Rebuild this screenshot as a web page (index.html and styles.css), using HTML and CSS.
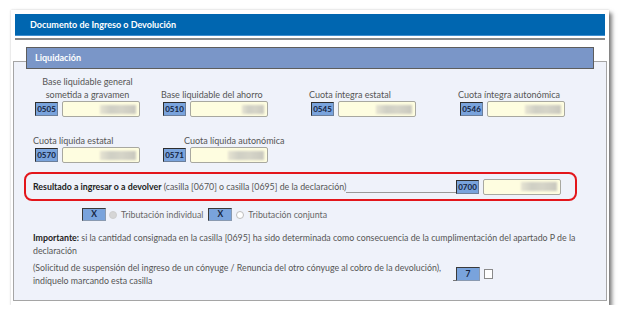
FILE: index.html
```html
<!DOCTYPE html>
<html lang="es">
<head>
<meta charset="utf-8">
<title>Documento de Ingreso o Devolución</title>
<link rel="stylesheet" href="styles.css">
</head>
<body>
<div class="card">
  <div class="titlebar">Documento de Ingreso o Devolución</div>
  <div class="rule"></div>
  <div class="section">
    <div class="sec-head">Liquidación</div>
    <div class="panel">
      <div class="grid row1">
        <div class="field">
          <div class="label center">Base liquidable general<br>sometida a gravamen</div>
          <div class="inputs"><span class="code">0505</span><span class="input"><span class="blur"></span></span></div>
        </div>
        <div class="field">
          <div class="label">Base liquidable del ahorro</div>
          <div class="inputs"><span class="code">0510</span><span class="input"><span class="blur short"></span></span></div>
        </div>
        <div class="field">
          <div class="label">Cuota íntegra estatal</div>
          <div class="inputs"><span class="code">0545</span><span class="input"><span class="blur"></span></span></div>
        </div>
        <div class="field">
          <div class="label">Cuota íntegra autonómica</div>
          <div class="inputs"><span class="code">0546</span><span class="input"><span class="blur"></span></span></div>
        </div>
      </div>
      <div class="grid row2">
        <div class="field">
          <div class="label">Cuota líquida estatal</div>
          <div class="inputs"><span class="code">0570</span><span class="input"><span class="blur"></span></span></div>
        </div>
        <div class="field">
          <div class="label indent">Cuota líquida autonómica</div>
          <div class="inputs"><span class="code">0571</span><span class="input"><span class="blur"></span></span></div>
        </div>
      </div>
      <div class="result">
        <span class="res-text"><b>Resultado a ingresar o a devolver</b> (casilla [0670] o casilla [0695] de la declaración)</span>
        <span class="filler"></span>
        <span class="code over">0700</span>
        <span class="input"><span class="blur"></span></span>
      </div>
      <div class="trib">
        <span class="xbox">X</span>
        <span class="radio disabled"></span>
        <span class="trib-label">Tributación individual</span>
        <span class="xbox">X</span>
        <span class="radio"></span>
        <span class="trib-label">Tributación conjunta</span>
      </div>
      <p class="imp"><b>Importante:</b> si la cantidad consignada en la casilla [0695] ha sido determinada como consecuencia de la cumplimentación del apartado P de la<br>declaración</p>
      <div class="susp">
        <p class="susp-text">(Solicitud de suspensión del ingreso de un cónyuge / Renuncia del otro cónyuge al cobro de la devolución),<br>indíquelo marcando esta casilla</p>
        <span class="tick"></span>
        <span class="xbox seven">7</span>
        <span class="check"></span>
      </div>
    </div>
  </div>
</div>
</body>
</html>
```
FILE: styles.css
```css
* { box-sizing: border-box; }
html, body { margin: 0; padding: 0; background: #ffffff; }
body { font-family: Lato, "Noto Sans", sans-serif; font-size: 8.8px; color: #555; }

.card {
  margin: 10px 0 0 11px;
  width: 598px;
  height: 295px;
  padding: 2px;
  background: #fff;
  box-shadow: 0 0 2px rgba(0,0,0,0.18), 3px 3px 4px rgba(0,0,0,0.5);
}
.titlebar {
  margin: 2px 2px 0;
  height: 22px;
  background: #0066b0;
  border-bottom: 1px solid #3f8fd0;
  color: #fff;
  font-weight: 700;
  font-size: 9px;
  line-height: 21px;
  padding-left: 15px;
}
.rule { margin: 2px 2px 0; height: 2px; background: #8a8a8a; }

.section { margin-top: 7px; }
.sec-head {
  position: relative;
  z-index: 1;
  margin: 0 13px;
  height: 22px;
  background: #7a96c8;
  border: 1px solid #5d5d5d;
  color: #fff;
  font-weight: 700;
  font-size: 9px;
  line-height: 20px;
  padding-left: 8px;
}
.panel {
  margin-top: -8px;
  height: 240px;
  background: #eff2fa;
  border: 1px solid #a5a5a5;
  padding-top: 13px;
}
.grid {
  display: grid;
  grid-template-columns: 128px 148px 149px 1fr;
  align-items: end;
  padding-left: 21px;
}
.row2 { margin-top: 17px; }
.field { display: flex; flex-direction: column; width: 105px; }
.label { line-height: 13px; color: #555; margin-left: -2px; white-space: nowrap; font-size: 9px; }
.label.center { text-align: center; margin-left: 0; }
.label.indent { margin-left: 21px; }
.inputs { display: flex; align-items: center; height: 16px; gap: 4px; }

.code {
  display: inline-block;
  width: 23px;
  height: 14px;
  background: #79a3dc;
  border: 1px solid #2e2e2e;
  border-right-color: #6c7f9a;
  border-bottom-color: #6c7f9a;
  color: #15233f;
  font-weight: 700;
  font-size: 8px;
  line-height: 12px;
  text-align: center;
  flex: none;
}
.input {
  display: flex;
  align-items: center;
  justify-content: flex-end;
  width: 78px;
  height: 16px;
  background: #fefde0;
  border: 1px solid #a8a8a0;
  border-radius: 2px;
  padding-right: 3px;
  flex: none;
}
.blur {
  display: block;
  width: 36px;
  height: 9px;
  background: linear-gradient(90deg, #e6e4d2, #cfcfc4 30%, #d6d5c8 60%, #c9c8be);
  filter: blur(1px);
}
.blur.short { width: 22px; }

.result {
  margin: 9px 29px 0 10px;
  height: 29px;
  border: 2px solid #e3161b;
  border-radius: 8px;
  display: flex;
  align-items: center;
  padding: 0 14px 0 7px;
}
.res-text { white-space: nowrap; color: #555; }
.res-text b { color: #222; }
.filler {
  flex: 1;
  height: 13px;
  border-bottom: 1px solid #999;
}
.code.over { margin-left: -5px; position: relative; }
.result .input { margin-left: 4px; }

.trib {
  display: flex;
  align-items: center;
  margin-top: 7px;
  padding-left: 68px;
  height: 13px;
}
.xbox {
  display: inline-block;
  width: 24px;
  height: 13px;
  background: #79a3dc;
  border: 1px solid #3a3a3a;
  border-right-color: #8a9ab0;
  border-bottom-color: #8a9ab0;
  color: #15233f;
  font-weight: 700;
  font-size: 8.5px;
  line-height: 11px;
  text-align: center;
  flex: none;
}
.radio {
  width: 8px;
  height: 8px;
  border-radius: 50%;
  border: 1px solid #bdbdbd;
  background: #fff;
  margin: 0 4px 0 4px;
  flex: none;
}
.radio.disabled { background: #d6d6d6; border-color: #cfcfcf; margin-left: 3px; }
.trib-label { color: #666; margin-right: 5px; }

.imp {
  margin: 10px 0 0 19px;
  line-height: 13px;
  color: #555;
}
.imp b { color: #222; }
.susp {
  display: flex;
  align-items: center;
  margin-top: 4px;
  padding-left: 19px;
}
.susp-text { margin: 0; line-height: 13px; width: 420px; color: #555; }
.tick { width: 3px; height: 14px; border-bottom: 1px solid #777; flex: none; }
.xbox.seven { width: 24px; height: 14px; line-height: 12px; }
.check {
  width: 9px;
  height: 10px;
  border: 1px solid #8a8a8a;
  background: #fff;
  margin-left: 4px;
  flex: none;
}
```
